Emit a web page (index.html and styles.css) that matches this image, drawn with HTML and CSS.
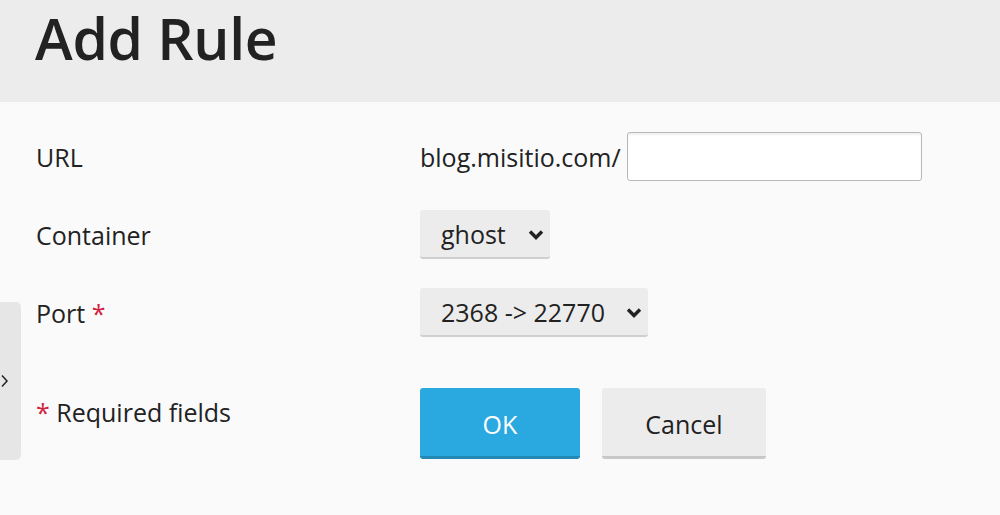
FILE: index.html
```html
<!DOCTYPE html>
<html lang="en">
<head>
  <meta charset="UTF-8" />
  <meta name="viewport" content="width=device-width, initial-scale=1" />
  <title>Add Rule</title>
  <link rel="stylesheet" href="styles.css">
</head>
<body>
  <div class="header">
    <h1>Add Rule</h1>
  </div>

  <div class="side-tab">
    <svg width="9" height="14" viewBox="0 0 9 14"><path d="M2 1.5 L7 7 L2 12.5" fill="none" stroke="#222" stroke-width="1.5"/></svg>
  </div>

  <form class="form">
    <div class="label">URL</div>
    <div class="field">
      <span class="prefix">blog.misitio.com/</span>
      <input type="text" class="text-input">
    </div>

    <div class="label">Container</div>
    <div class="field">
      <div class="select small">
        <select><option>ghost</option></select>
        <svg class="chevron" width="16" height="11" viewBox="0 0 16 11"><path d="M2 2.5 L8 8.5 L14 2.5" fill="none" stroke="#222" stroke-width="3.4"/></svg>
      </div>
    </div>

    <div class="label">Port <span class="req">*</span></div>
    <div class="field">
      <div class="select wide">
        <select><option>2368 -&gt; 22770</option></select>
        <svg class="chevron" width="16" height="11" viewBox="0 0 16 11"><path d="M2 2.5 L8 8.5 L14 2.5" fill="none" stroke="#222" stroke-width="3.4"/></svg>
      </div>
    </div>

    <div class="label actions-label"><span class="req">*</span> Required fields</div>
    <div class="field actions">
      <button type="button" class="btn ok">OK</button>
      <button type="button" class="btn cancel">Cancel</button>
    </div>
  </form>
</body>
</html>
```

FILE: styles.css
```css
body {
  font-family: 'Open Sans', sans-serif;
  background-color: #fafafa;
  color: #222;
  margin: 0;
  height: 515px;
  overflow: hidden;
}
.header {
  background-color: #ececec;
  height: 102px;
  padding-left: 35px;
  box-sizing: border-box;
}
.header h1 {
  margin: 0;
  font-size: 57px;
  font-weight: 600;
  line-height: 76px;
  letter-spacing: -0.3px;
}
.side-tab {
  position: absolute;
  left: 0;
  top: 302px;
  width: 21px;
  height: 158px;
  background-color: #e6e6e6;
  border-radius: 0 5px 5px 0;
  display: flex;
  align-items: center;
}
.form {
  display: grid;
  grid-template-columns: 384px auto;
  row-gap: 29px;
  padding: 30px 0 0 36px;
}
.label {
  font-size: 25px;
  line-height: 30px;
  padding-top: 10px;
}
.req {
  color: #d0213f;
}
.field {
  display: flex;
  align-items: center;
  height: 49px;
}
.prefix {
  font-size: 25px;
  margin-right: 6px;
}
.text-input {
  width: 295px;
  height: 49px;
  box-sizing: border-box;
  border: 1.5px solid #b8b8b8;
  border-radius: 3px;
  background: #fff;
  box-shadow: inset 0 2px 2px rgba(0, 0, 0, 0.06);
  font-family: inherit;
  font-size: 25px;
  padding: 0 10px;
}
.select {
  position: relative;
  height: 49px;
}
.select select {
  appearance: none;
  -webkit-appearance: none;
  height: 49px;
  border: none;
  border-bottom: 2px solid #cfcfcf;
  border-radius: 3px;
  background-color: #ececec;
  font-family: inherit;
  font-size: 25px;
  color: #222;
  padding: 0 0 0 21px;
  box-sizing: border-box;
}
.select.small select {
  width: 130px;
}
.select.wide select {
  width: 228px;
}
.chevron {
  position: absolute;
  right: 6px;
  top: 19px;
  pointer-events: none;
}
.actions-label {
  margin-top: 21px;
}
.actions {
  margin-top: 22px;
  height: 71px;
  gap: 22px;
}
.btn {
  height: 71px;
  padding-top: 4px;
  border: none;
  border-radius: 3px;
  font-family: inherit;
  font-size: 25px;
  cursor: pointer;
}
.btn.ok {
  width: 160px;
  background-color: #29a9df;
  border-bottom: 3px solid #2488b5;
  color: #fff;
}
.btn.cancel {
  width: 164px;
  background-color: #ececec;
  border-bottom: 3px solid #c8c8c8;
  color: #222;
}
```
